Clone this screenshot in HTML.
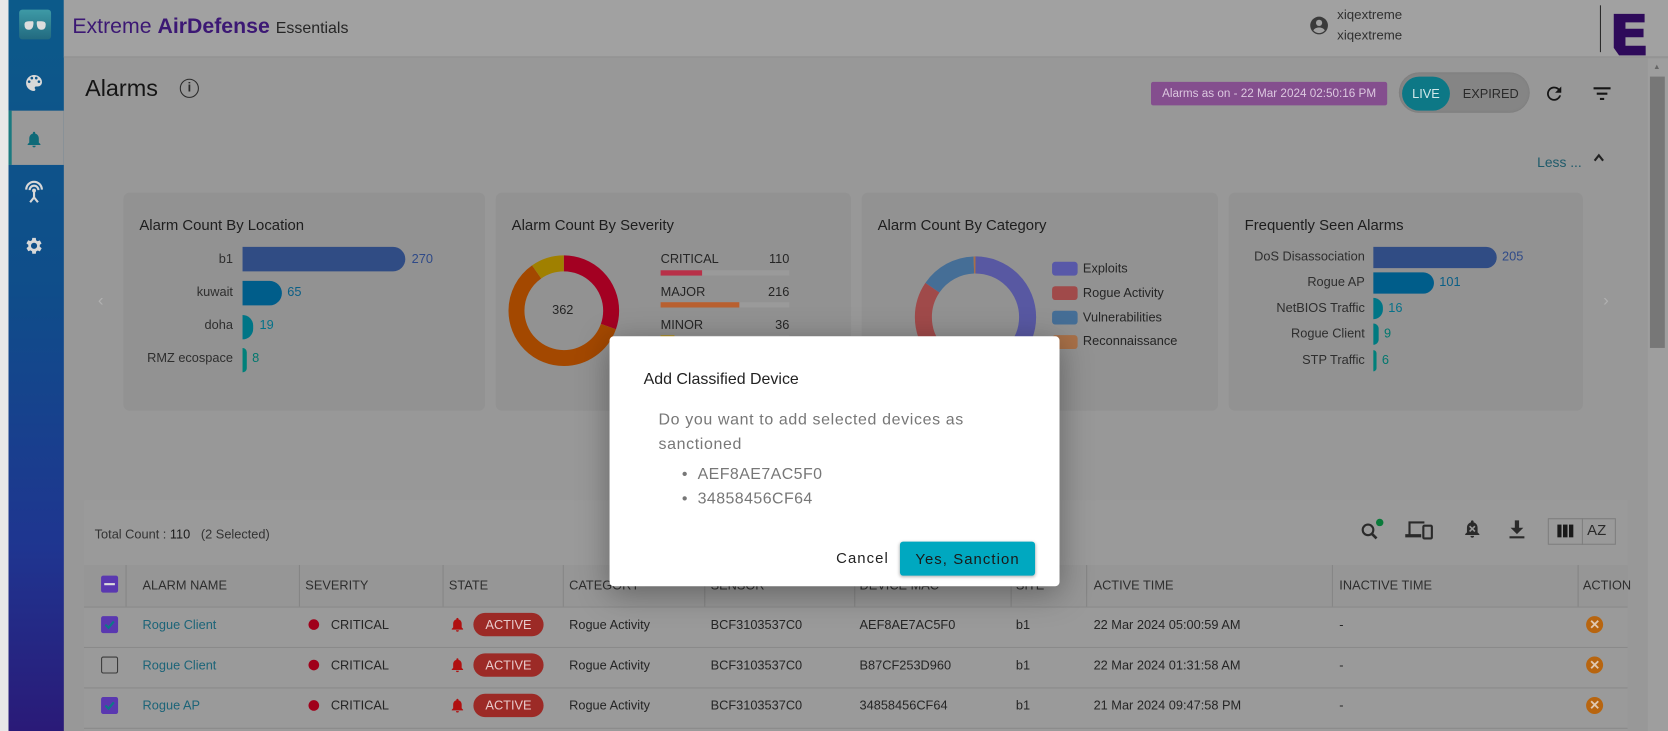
<!DOCTYPE html>
<html><head><meta charset="utf-8"><style>
*{margin:0;padding:0;box-sizing:border-box}
html,body{width:1668px;height:731px;overflow:hidden;background:#999}
body{font-family:"Liberation Sans",sans-serif;color:#222}
#w{position:absolute;left:0;top:0;width:1568px;height:687px;transform:scale(1.06378,1.06405);transform-origin:0 0;background:#989898;overflow:hidden}
.a{position:absolute;white-space:nowrap}
.card{position:absolute;top:181px;height:205px;background:#929292;border-radius:6px}
.ct{position:absolute;left:15px;top:22px;font-size:14px;color:#1e1e1e}
.lbl{position:absolute;font-size:12px;color:#2e2e2e;text-align:right;width:120px}
.bar{position:absolute;border-radius:0 12px 12px 0}
.val{position:absolute;font-size:12px}
.th{position:absolute;top:531px;height:39px;font-size:12px;color:#2e2e2e;line-height:39px}
.td{position:absolute;font-size:12px;color:#252525}
.vl{position:absolute;top:531px;width:1px;height:39px;background:#858585}
.hl{position:absolute;left:79px;width:1451px;height:1px;background:#8a8a8a}
.pill{position:absolute;left:445px;width:66px;height:22px;border-radius:11px;background:#9c2a26;color:#e8caca;font-size:12px;text-align:center;line-height:22px}
.dot{position:absolute;left:290px;width:10px;height:10px;border-radius:50%;background:#a0001a}
.x{position:absolute;left:1491px;width:16px;height:16px;border-radius:50%;background:#b8650f;color:#e0c8b0;font-size:12px;font-weight:bold;text-align:center;line-height:16px}
.cb{position:absolute;left:95px;width:16px;height:16px;border-radius:2px}
</style></head><body><div id="w">
<div class="a" style="left:0;top:0;width:8px;height:687px;background:#e8e8e8"></div>
<div class="a" style="left:8px;top:0;width:52px;height:687px;background:linear-gradient(#0c5a8a,#0f4d8a 40%,#1f3590 75%,#2a1a78)"></div>
<div class="a" style="left:18px;top:9px;width:30px;height:28px;border-radius:3px;background:linear-gradient(#3e9aa6,#226a80)"></div>
<svg class="a" style="left:18px;top:9px" width="30" height="28"><path d="M5 14 Q5 11 9 11 L13 11 Q14 12 13 16 Q12 19 9 19 Q5 19 5 14Z M25 14 Q25 11 21 11 L17 11 Q16 12 17 16 Q18 19 21 19 Q25 19 25 14Z" fill="#ddd"/></svg>
<svg class="a" style="left:22px;top:68px" width="20" height="20" viewBox="0 0 24 24"><path fill="#d8d8d8" d="M12 3a9 9 0 0 0 0 18c.8 0 1.5-.7 1.5-1.5 0-.4-.2-.7-.4-1-.2-.3-.4-.6-.4-1 0-.8.7-1.5 1.5-1.5H16a5 5 0 0 0 5-5c0-4.4-4-8-9-8zm-5.5 9a1.5 1.5 0 1 1 0-3 1.5 1.5 0 0 1 0 3zm3-4a1.5 1.5 0 1 1 0-3 1.5 1.5 0 0 1 0 3zm5 0a1.5 1.5 0 1 1 0-3 1.5 1.5 0 0 1 0 3zm3 4a1.5 1.5 0 1 1 0-3 1.5 1.5 0 0 1 0 3z"/></svg>
<div class="a" style="left:8px;top:104px;width:52px;height:51px;background:#999;border-left:3px solid #1a7a80"></div>
<svg class="a" style="left:23px;top:121px" width="18" height="20" viewBox="0 0 24 24"><path fill="#0e6a78" d="M12 22a2 2 0 0 0 2-2h-4a2 2 0 0 0 2 2zm6-6v-5c0-3.1-1.6-5.6-4.5-6.3V4a1.5 1.5 0 0 0-3 0v.7C7.6 5.4 6 7.9 6 11v5l-2 2v1h16v-1l-2-2z"/></svg>
<svg class="a" style="left:21px;top:168px" width="22" height="24" viewBox="0 0 24 26"><g fill="none" stroke="#d8d8d8" stroke-width="2.2"><path d="M4 11a8 8 0 0 1 16 0"/><path d="M7.5 11.5a4.5 4.5 0 0 1 9 0"/><path d="M12 13 L12 19 M12 19 L8 24 M12 19 L16 24"/></g><circle cx="12" cy="12" r="2" fill="#d8d8d8"/></svg>
<svg class="a" style="left:22px;top:221px" width="20" height="20" viewBox="0 0 24 24"><path fill="#d8d8d8" d="M19.4 13a7.5 7.5 0 0 0 0-2l2.1-1.6-2-3.5-2.5 1a7 7 0 0 0-1.7-1L15 3h-4l-.4 2.7a7 7 0 0 0-1.7 1l-2.5-1-2 3.5L6.6 11a7.5 7.5 0 0 0 0 2l-2.1 1.6 2 3.5 2.5-1a7 7 0 0 0 1.7 1L11 21h4l.4-2.7a7 7 0 0 0 1.700-1l2.5 1 2-3.5L19.4 13zM13 15.5a3.5 3.5 0 1 1 0-7 3.5 3.5 0 0 1 0 7z" transform="translate(-1 0)"/></svg>
<div class="a" style="left:60px;top:0;width:1508px;height:54px;background:#a1a1a1;border-bottom:1px solid #8e8e8e"></div>
<div class="a" style="left:68px;top:14px;font-size:20px;color:#3c1874">Extreme <b>AirDefense</b> <span style="font-size:15px;color:#262626">Essentials</span></div>
<svg class="a" style="left:1230px;top:14px" width="20" height="20" viewBox="0 0 24 24"><circle cx="12" cy="12" r="10" fill="#3a3a3a"/><circle cx="12" cy="9" r="3.5" fill="#a1a1a1"/><path d="M5.5 17.5c1.5-2.5 4-3.3 6.5-3.3s5 .8 6.5 3.3A8.5 8.5 0 0 1 12 20.5a8.5 8.5 0 0 1-6.5-3z" fill="#a1a1a1"/></svg>
<div class="a" style="left:1257px;top:5px;font-size:12.5px;color:#303030;line-height:19px">xiqextreme<br>xiqextreme</div>
<div class="a" style="left:1504px;top:5px;width:1px;height:44px;background:#2a2a2a"></div>
<svg class="a" style="left:1516px;top:12px" width="34" height="42" viewBox="0 0 34 42"><path fill="#2e0a5a" d="M1 1H30V9H12V15H29V23H12V31H31V40H6L1 33Z"/></svg>
<div class="a" style="left:1549px;top:55px;width:19px;height:632px;background:#9e9e9e"></div>
<div class="a" style="left:1551px;top:72px;width:14px;height:255px;background:#777"></div>
<div class="a" style="left:1554px;top:60px;font-size:7px;color:#666">▲</div>
<div class="a" style="left:80px;top:70px;font-size:22px;color:#151515">Alarms</div>
<div class="a" style="left:169px;top:74px;width:18px;height:18px;border:1.8px solid #2a2a2a;border-radius:50%;font-size:12px;text-align:center;line-height:15px;color:#2a2a2a;font-weight:bold">i</div>
<div class="a" style="left:1082px;top:77px;width:222px;height:22px;background:#844e8e;border-radius:2px;color:#dcc8e0;font-size:11px;text-align:center;line-height:22px">Alarms as on - 22 Mar 2024 02:50:16 PM</div>
<div class="a" style="left:1315px;top:68px;width:123px;height:38px;border-radius:19px;background:#858585;box-shadow:inset 0 0 2px #777"></div>
<div class="a" style="left:1318px;top:72px;width:45px;height:32px;border-radius:16px;background:#0d7886;color:#d0e8ea;font-size:12px;text-align:center;line-height:32px">LIVE</div>
<div class="a" style="left:1375px;top:81px;font-size:12px;color:#2a2a2a">EXPIRED</div>
<svg class="a" style="left:1451px;top:78px" width="20" height="20" viewBox="0 0 24 24"><path fill="#151515" d="M17.6 6.4A8 8 0 1 0 19.7 14h-2.1a6 6 0 1 1-1.4-6.2L13 11h7V4z"/></svg>
<svg class="a" style="left:1496px;top:80px" width="20" height="16" viewBox="0 0 20 16"><path stroke="#151515" stroke-width="2" d="M2 3H18M5 8H15M8 13H12"/></svg>
<div class="a" style="left:1445px;top:145px;font-size:13px;color:#1e5a6a">Less ...</div>
<svg class="a" style="left:1497px;top:143px" width="12" height="10"><path d="M2 8L6 3L10 8" stroke="#222" stroke-width="2" fill="none"/></svg>
<div class="a" style="left:92px;top:274px;font-size:16px;color:#b0b0b0">‹</div>
<div class="a" style="left:1507px;top:274px;font-size:16px;color:#b0b0b0">›</div>
<div class="card" style="left:116px;width:340px"><div class="ct">Alarm Count By Location</div></div>
<div class="lbl" style="left:99px;top:236px">b1</div><div class="bar" style="left:228px;top:232px;width:153px;height:23px;background:#304c84"></div><div class="val" style="left:387px;top:236px;color:#2f4a88">270</div>
<div class="lbl" style="left:99px;top:267px">kuwait</div><div class="bar" style="left:228px;top:264px;width:37px;height:23px;background:#005d8a"></div><div class="val" style="left:270px;top:267px;color:#0a5f86">65</div>
<div class="lbl" style="left:99px;top:298px">doha</div><div class="bar" style="left:228px;top:296px;width:10px;height:23px;background:#007586"></div><div class="val" style="left:244px;top:298px;color:#06728a">19</div>
<div class="lbl" style="left:99px;top:329px">RMZ ecospace</div><div class="bar" style="left:228px;top:327px;width:4px;height:23px;background:#00807a"></div><div class="val" style="left:237px;top:329px;color:#00776e">8</div>
<div class="card" style="left:466px;width:334px"><div class="ct">Alarm Count By Severity</div></div>
<svg class="a" style="left:476px;top:238px" width="108" height="108"><g transform="rotate(-90 54 54)" fill="none" stroke-width="15"><circle cx="54" cy="54" r="44.5" stroke="#a30022" stroke-dasharray="85 300"/><circle cx="54" cy="54" r="44.5" stroke="#a34800" stroke-dasharray="0 85 167 300"/><circle cx="54" cy="54" r="44.5" stroke="#a08000" stroke-dasharray="0 252 28 300"/></g></svg>
<div class="a" style="left:519px;top:284px;font-size:12px;color:#252525">362</div>
<div class="a" style="left:621px;top:236px;font-size:12px;color:#252525">CRITICAL</div><div class="a" style="left:710px;top:236px;width:32px;text-align:right;font-size:12px;color:#252525">110</div>
<div class="a" style="left:621px;top:254px;width:121px;height:5px;background:#9a9a9a"></div><div class="a" style="left:621px;top:254px;width:39px;height:5px;background:#b83048"></div>
<div class="a" style="left:621px;top:267px;font-size:12px;color:#252525">MAJOR</div><div class="a" style="left:710px;top:267px;width:32px;text-align:right;font-size:12px;color:#252525">216</div>
<div class="a" style="left:621px;top:284px;width:121px;height:5px;background:#9a9a9a"></div><div class="a" style="left:621px;top:284px;width:74px;height:5px;background:#b86030"></div>
<div class="a" style="left:621px;top:298px;font-size:12px;color:#252525">MINOR</div><div class="a" style="left:710px;top:298px;width:32px;text-align:right;font-size:12px;color:#252525">36</div>
<div class="a" style="left:621px;top:315px;width:121px;height:5px;background:#9a9a9a"></div><div class="a" style="left:621px;top:315px;width:13px;height:5px;background:#b09020"></div>
<div class="card" style="left:810px;width:335px"><div class="ct">Alarm Count By Category</div></div>
<svg class="a" style="left:859px;top:240px" width="116" height="116"><g transform="rotate(-90 58 58)" fill="none" stroke-width="16"><circle cx="58" cy="58" r="49" stroke="#5858a2" stroke-dasharray="160 400"/><circle cx="58" cy="58" r="49" stroke="#a04a4a" stroke-dasharray="0 160 100 400"/><circle cx="58" cy="58" r="49" stroke="#456e96" stroke-dasharray="0 260 46 400"/><circle cx="58" cy="58" r="49" stroke="#a87048" stroke-dasharray="0 306 2 400"/></g></svg>
<div class="a" style="left:989px;top:246px;width:24px;height:13px;border-radius:3px;background:#5858a8"></div><div class="a" style="left:1018px;top:245px;font-size:12px;color:#252525">Exploits</div>
<div class="a" style="left:989px;top:269px;width:24px;height:13px;border-radius:3px;background:#a04a4a"></div><div class="a" style="left:1018px;top:268px;font-size:12px;color:#252525">Rogue Activity</div>
<div class="a" style="left:989px;top:292px;width:24px;height:13px;border-radius:3px;background:#456e96"></div><div class="a" style="left:1018px;top:291px;font-size:12px;color:#252525">Vulnerabilities</div>
<div class="a" style="left:989px;top:315px;width:24px;height:13px;border-radius:3px;background:#a87048"></div><div class="a" style="left:1018px;top:313px;font-size:12px;color:#252525">Reconnaissance</div>
<div class="card" style="left:1155px;width:333px"><div class="ct">Frequently Seen Alarms</div></div>
<div class="lbl" style="left:1163px;top:234px">DoS Disassociation</div><div class="bar" style="left:1291px;top:232px;width:116px;height:20px;background:#304c84"></div><div class="val" style="left:1412px;top:234px;color:#2f4a88">205</div>
<div class="lbl" style="left:1163px;top:258px">Rogue AP</div><div class="bar" style="left:1291px;top:256px;width:57px;height:20px;background:#005d8a"></div><div class="val" style="left:1353px;top:258px;color:#0a5f86">101</div>
<div class="lbl" style="left:1163px;top:282px">NetBIOS Traffic</div><div class="bar" style="left:1291px;top:280px;width:9px;height:20px;background:#007586"></div><div class="val" style="left:1305px;top:282px;color:#06728a">16</div>
<div class="lbl" style="left:1163px;top:306px">Rogue Client</div><div class="bar" style="left:1291px;top:304px;width:5px;height:20px;background:#007a80"></div><div class="val" style="left:1301px;top:306px;color:#00776e">9</div>
<div class="lbl" style="left:1163px;top:331px">STP Traffic</div><div class="bar" style="left:1291px;top:329px;width:3px;height:20px;background:#00807a"></div><div class="val" style="left:1299px;top:331px;color:#00776e">6</div>
<div class="a" style="left:79px;top:470px;width:1451px;height:217px;background:#9a9a9a"></div>
<div class="a" style="left:79px;top:531px;width:1451px;height:39px;background:#969696"></div>
<div class="a" style="left:89px;top:495px;font-size:12px;color:#333">Total Count : <span style="color:#1a1a1a">110</span> &nbsp; (2 Selected)</div>
<svg class="a" style="left:1278px;top:486px" width="26" height="24" viewBox="0 0 26 24"><circle cx="8" cy="12" r="5" fill="none" stroke="#2a2a2a" stroke-width="2"/><path d="M12 16L16 20" stroke="#2a2a2a" stroke-width="2.5"/><circle cx="19" cy="5" r="3.5" fill="#0a7a3a"/></svg>
<svg class="a" style="left:1320px;top:487px" width="28" height="22" viewBox="0 0 28 22"><path d="M4 3H19V5H6V15H4Z M1 15H16V18H1Z" fill="#2a2a2a"/><rect x="18" y="7" width="8" height="12" rx="1" fill="none" stroke="#2a2a2a" stroke-width="2"/></svg>
<svg class="a" style="left:1374px;top:485px" width="20" height="24" viewBox="0 0 24 24"><path fill="#2a2a2a" d="M12 22a2 2 0 0 0 2-2h-4a2 2 0 0 0 2 2zm6-6v-5c0-3.1-1.6-5.6-4.5-6.3V4a1.5 1.5 0 0 0-3 0v.7C7.6 5.4 6 7.9 6 11v5l-2 2v1h16v-1l-2-2z"/><path d="M9 9L15 15M15 9L9 15" stroke="#999" stroke-width="1.8"/></svg>
<svg class="a" style="left:1417px;top:487px" width="18" height="20" viewBox="0 0 18 20"><path fill="#2a2a2a" d="M7 2H11V9H15L9 15L3 9H7Z M2 17H16V19H2Z"/></svg>
<div class="a" style="left:1455px;top:487px;width:64px;height:25px;border:1px solid #7e7e7e"></div>
<div class="a" style="left:1487px;top:487px;width:1px;height:25px;background:#7e7e7e"></div>
<div class="a" style="left:1464px;top:493px;width:15px;height:12px;background:linear-gradient(90deg,#1a1a1a 0 4px,transparent 4px 5.5px,#1a1a1a 5.5px 9.5px,transparent 9.5px 11px,#1a1a1a 11px)"></div>
<div class="a" style="left:1492px;top:490px;font-size:14px;color:#2a2a2a">AZ</div>
<div class="cb" style="left:95px;top:541px;background:#5a38b0"></div><div class="a" style="left:98px;top:548px;width:10px;height:2px;background:#ddd"></div>
<div class="vl" style="left:118px"></div><div class="vl" style="left:281px"></div><div class="vl" style="left:416px"></div><div class="vl" style="left:529px"></div><div class="vl" style="left:662px"></div><div class="vl" style="left:803px"></div><div class="vl" style="left:950px"></div><div class="vl" style="left:1021px"></div><div class="vl" style="left:1252px"></div><div class="vl" style="left:1483px"></div>
<div class="th" style="left:134px">ALARM NAME</div><div class="th" style="left:287px">SEVERITY</div><div class="th" style="left:422px">STATE</div><div class="th" style="left:535px">CATEGORY</div><div class="th" style="left:668px">SENSOR</div><div class="th" style="left:808px">DEVICE MAC</div><div class="th" style="left:955px">SITE</div><div class="th" style="left:1028px">ACTIVE TIME</div><div class="th" style="left:1259px">INACTIVE TIME</div><div class="th" style="left:1488px">ACTION</div>
<div class="hl" style="top:570px"></div><div class="hl" style="top:608px"></div><div class="hl" style="top:646px"></div><div class="hl" style="top:684px"></div>
<div class="cb" style="top:579px;background:#5a38b0;border:1px solid #5a38b0"></div><svg class="a" style="left:96px;top:580px" width="14" height="14"><path d="M3 7L6 10L11 4" stroke="#0c7a86" stroke-width="2" fill="none"/></svg>
<div class="cb" style="top:617px;border:1.5px solid #3a3a3a"></div>
<div class="cb" style="top:655px;background:#5a38b0;border:1px solid #5a38b0"></div><svg class="a" style="left:96px;top:656px" width="14" height="14"><path d="M3 7L6 10L11 4" stroke="#0c7a86" stroke-width="2" fill="none"/></svg>
<div class="td" style="left:134px;top:580px;color:#1c6478">Rogue Client</div><div class="td" style="left:134px;top:618px;color:#1c6478">Rogue Client</div><div class="td" style="left:134px;top:656px;color:#1c6478">Rogue AP</div>
<div class="dot" style="top:582px"></div><div class="dot" style="top:620px"></div><div class="dot" style="top:658px"></div>
<div class="td" style="left:311px;top:580px">CRITICAL</div><div class="td" style="left:311px;top:618px">CRITICAL</div><div class="td" style="left:311px;top:656px">CRITICAL</div>
<svg class="a" style="left:422px;top:579px" width="16" height="16" viewBox="0 0 24 24"><path fill="#b01010" d="M12 22a2 2 0 0 0 2-2h-4a2 2 0 0 0 2 2zm6-6v-5c0-3.1-1.6-5.6-4.5-6.3V4a1.5 1.5 0 0 0-3 0v.7C7.6 5.4 6 7.9 6 11v5l-2 2v1h16v-1l-2-2z"/></svg>
<svg class="a" style="left:422px;top:617px" width="16" height="16" viewBox="0 0 24 24"><path fill="#b01010" d="M12 22a2 2 0 0 0 2-2h-4a2 2 0 0 0 2 2zm6-6v-5c0-3.1-1.6-5.6-4.5-6.3V4a1.5 1.5 0 0 0-3 0v.7C7.6 5.4 6 7.9 6 11v5l-2 2v1h16v-1l-2-2z"/></svg>
<svg class="a" style="left:422px;top:655px" width="16" height="16" viewBox="0 0 24 24"><path fill="#b01010" d="M12 22a2 2 0 0 0 2-2h-4a2 2 0 0 0 2 2zm6-6v-5c0-3.1-1.6-5.6-4.5-6.3V4a1.5 1.5 0 0 0-3 0v.7C7.6 5.4 6 7.9 6 11v5l-2 2v1h16v-1l-2-2z"/></svg>
<div class="pill" style="top:576px">ACTIVE</div><div class="pill" style="top:614px">ACTIVE</div><div class="pill" style="top:652px">ACTIVE</div>
<div class="td" style="left:535px;top:580px">Rogue Activity</div><div class="td" style="left:535px;top:618px">Rogue Activity</div><div class="td" style="left:535px;top:656px">Rogue Activity</div>
<div class="td" style="left:668px;top:580px">BCF3103537C0</div><div class="td" style="left:668px;top:618px">BCF3103537C0</div><div class="td" style="left:668px;top:656px">BCF3103537C0</div>
<div class="td" style="left:808px;top:580px">AEF8AE7AC5F0</div><div class="td" style="left:808px;top:618px">B87CF253D960</div><div class="td" style="left:808px;top:656px">34858456CF64</div>
<div class="td" style="left:955px;top:580px">b1</div><div class="td" style="left:955px;top:618px">b1</div><div class="td" style="left:955px;top:656px">b1</div>
<div class="td" style="left:1028px;top:580px">22 Mar 2024 05:00:59 AM</div><div class="td" style="left:1028px;top:618px">22 Mar 2024 01:31:58 AM</div><div class="td" style="left:1028px;top:656px">21 Mar 2024 09:47:58 PM</div>
<div class="td" style="left:1259px;top:580px">-</div><div class="td" style="left:1259px;top:618px">-</div><div class="td" style="left:1259px;top:656px">-</div>
<div class="x" style="top:579px">✕</div><div class="x" style="top:617px">✕</div><div class="x" style="top:655px">✕</div>
<div class="a" style="left:573px;top:316px;width:423px;height:235px;background:#fff;border-radius:4px;box-shadow:0 6px 30px rgba(0,0,0,.35)">
<div class="a" style="left:32px;top:32px;font-size:15px;color:#222">Add Classified Device</div>
<div class="a" style="left:46px;top:67px;font-size:15px;color:#777;line-height:23px;letter-spacing:.6px">Do you want to add selected devices as<br>sanctioned</div>
<div class="a" style="left:68px;top:118px;font-size:15px;color:#777;line-height:23px;letter-spacing:.4px">• &nbsp;AEF8AE7AC5F0<br>• &nbsp;34858456CF64</div>
<div class="a" style="left:213px;top:200px;font-size:14px;color:#222;letter-spacing:1px">Cancel</div>
<div class="a" style="left:273px;top:193px;width:127px;height:32px;background:#00a8c0;border-radius:3px;box-shadow:0 1px 3px rgba(0,0,0,.3);font-size:14px;color:#1a1a1a;letter-spacing:1px;text-align:center;line-height:32px">Yes, Sanction</div>
</div>
</div></body></html>
